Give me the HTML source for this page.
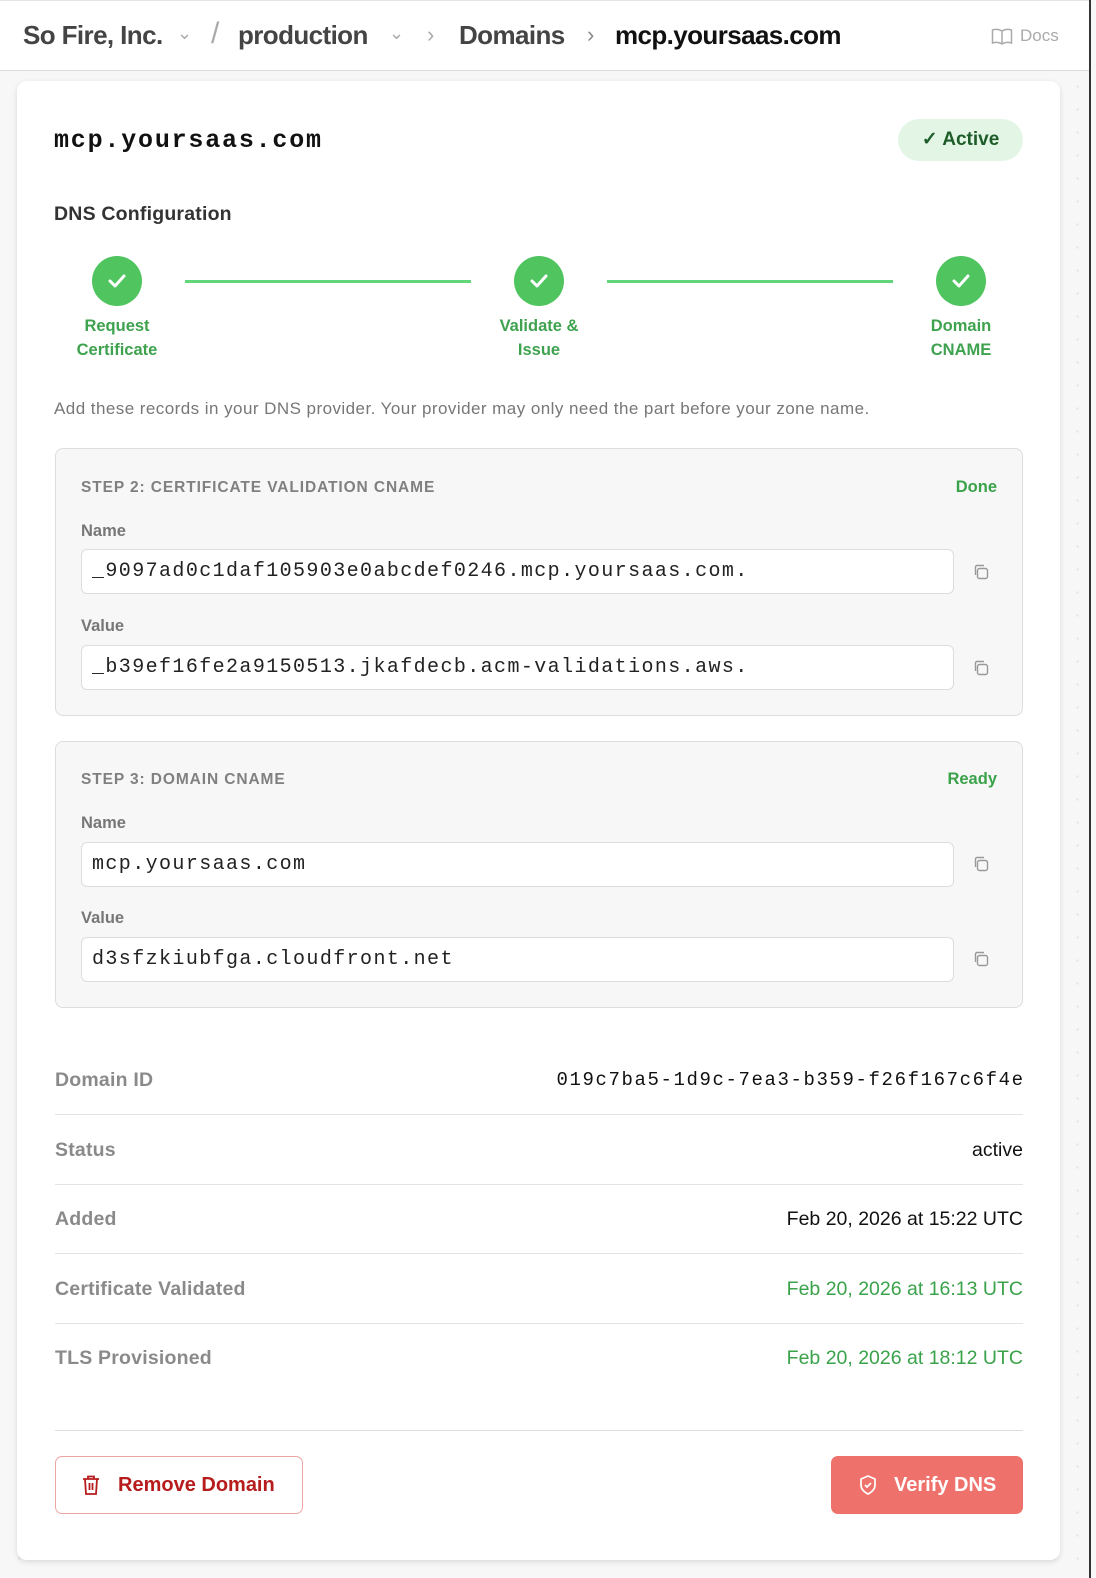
<!DOCTYPE html>
<html><head><meta charset="utf-8"><style>
*{box-sizing:border-box;margin:0;padding:0}
body{width:1096px;height:1578px;overflow:hidden;background:#f7f7f7;font-family:"Liberation Sans",sans-serif;position:relative;
background-image:radial-gradient(#e2e2e2 1px,transparent 1.2px);background-size:23px 23px;background-position:8px 6px}
.hdr{position:absolute;left:0;top:0;width:1090px;height:71px;background:#fff;border-bottom:1px solid #ddd;border-top:1px solid #e4e4e4}
.bc{position:absolute;top:19px;left:23px;font-size:26px;font-weight:bold;color:#444;white-space:nowrap;letter-spacing:-0.6px}
.bc span{position:absolute;top:0}
.muted{color:#aaa;font-weight:normal}
.sb{position:absolute;left:1089px;top:0;width:2px;height:1578px;background:#333}
.card{position:absolute;left:17px;top:81px;width:1043px;height:1479px;background:#fff;border-radius:10px;box-shadow:0 2px 6px rgba(0,0,0,.12)}
.a{position:absolute;white-space:nowrap}
.mono{font-family:"Liberation Mono",monospace}
.circ{position:absolute;width:50px;height:50px;border-radius:50%;background:#4fc45f;top:175px}
.line{position:absolute;height:3px;background:#62d67a;top:199px}
.lbl{position:absolute;width:160px;text-align:center;color:#3ea24e;font-weight:bold;font-size:16.5px;line-height:24px;top:233px}
.box{position:absolute;left:38px;width:968px;background:#f7f7f7;border:1px solid #ddd;border-radius:8px}
.bh{position:absolute;left:25px;font-size:15.5px;font-weight:bold;color:#808080;letter-spacing:0.9px}
.st{position:absolute;right:25px;font-size:16.5px;font-weight:bold;color:#3aa24a}
.fl{position:absolute;left:25px;font-size:16.5px;font-weight:bold;color:#777}
.inp{position:absolute;left:25px;width:873px;height:45px;background:#fff;border:1px solid #ddd;border-radius:6px;font-family:"Liberation Mono",monospace;font-size:20px;letter-spacing:1.4px;line-height:43px;padding-left:10px;color:#222}
.cp{position:absolute;left:916px}
.row{position:absolute;left:38px;width:968px;height:70px;border-bottom:1px solid #e3e3e3}
.row .k{position:absolute;left:0;top:24px;font-size:19.5px;font-weight:bold;color:#8a8a8a;letter-spacing:0.2px}
.row .v{position:absolute;right:0;top:24px;font-size:19.5px;color:#111}
</style></head><body>
<div class="hdr">
<div class="bc">
<span style="left:0">So Fire, Inc.</span>
<span class="muted" style="left:154px;font-size:18px;top:3px">⌄</span>
<span class="muted" style="left:188px;font-size:30px;top:-3px">/</span>
<span style="left:215px">production</span>
<span class="muted" style="left:366px;font-size:18px;top:3px">⌄</span>
<span class="muted" style="left:404px;font-size:22px;top:2px">›</span>
<span style="left:436px">Domains</span>
<span class="muted" style="left:564px;font-size:22px;top:2px;color:#888">›</span>
<span style="left:592px;color:#111">mcp.yoursaas.com</span>
</div>
<svg style="position:absolute;left:991px;top:27px" width="22" height="18" viewBox="0 0 22 18" fill="none" stroke="#aaa" stroke-width="1.5"><path d="M11 3C8 1 4 1 1.5 2v13c2.5-1 6.5-1 9.5 1 3-2 7-2 9.5-1V2C18 1 14 1 11 3zM11 3v13"/></svg>
<div class="a" style="left:1020px;top:25px;font-size:17px;color:#aaa">Docs</div>
</div>
<div class="card">
<div class="a mono" style="left:37px;top:45px;font-size:25px;letter-spacing:1.8px;font-weight:bold;color:#111">mcp.yoursaas.com</div>
<div class="a" style="left:881px;top:38px;width:125px;height:42px;border-radius:21px;background:#e3f6e6;color:#1e5c29;font-size:19px;font-weight:bold;line-height:42px;text-align:center">✓ Active</div>
<div class="a" style="left:37px;top:122px;font-size:19.5px;font-weight:bold;color:#333;letter-spacing:0.2px">DNS Configuration</div>
<div class="line" style="left:168px;width:286px"></div>
<div class="line" style="left:590px;width:286px"></div>
<div class="circ" style="left:75px"></div><div class="circ" style="left:497px"></div><div class="circ" style="left:919px"></div>
<svg class="a" style="left:75px;top:175px" width="50" height="50"><path d="M18 25l5 5 9-10" stroke="#fff" stroke-width="3" fill="none" stroke-linecap="round" stroke-linejoin="round"/></svg>
<svg class="a" style="left:497px;top:175px" width="50" height="50"><path d="M18 25l5 5 9-10" stroke="#fff" stroke-width="3" fill="none" stroke-linecap="round" stroke-linejoin="round"/></svg>
<svg class="a" style="left:919px;top:175px" width="50" height="50"><path d="M18 25l5 5 9-10" stroke="#fff" stroke-width="3" fill="none" stroke-linecap="round" stroke-linejoin="round"/></svg>
<div class="lbl" style="left:20px">Request<br>Certificate</div>
<div class="lbl" style="left:442px">Validate &amp;<br>Issue</div>
<div class="lbl" style="left:864px">Domain<br>CNAME</div>
<div class="a" style="left:37px;top:318px;font-size:17px;letter-spacing:0.45px;color:#777">Add these records in your DNS provider. Your provider may only need the part before your zone name.</div>

<div class="box" style="top:367px;height:268px">
<div class="bh" style="top:30px">STEP 2: CERTIFICATE VALIDATION CNAME</div><div class="st" style="top:29px">Done</div>
<div class="fl" style="top:73px">Name</div>
<div class="inp" style="top:100px">_9097ad0c1daf105903e0abcdef0246.mcp.yoursaas.com.</div>
<svg class="cp" style="top:114px" width="18" height="18" fill="none" stroke="#999" stroke-width="1.4"><rect x="5.5" y="5.5" width="10" height="10" rx="2"/><path d="M3.5 12V4a1.5 1.5 0 0 1 1.5-1.5h7"/></svg>
<div class="fl" style="top:168px">Value</div>
<div class="inp" style="top:196px">_b39ef16fe2a9150513.jkafdecb.acm-validations.aws.</div>
<svg class="cp" style="top:210px" width="18" height="18" fill="none" stroke="#999" stroke-width="1.4"><rect x="5.5" y="5.5" width="10" height="10" rx="2"/><path d="M3.5 12V4a1.5 1.5 0 0 1 1.5-1.5h7"/></svg>
</div>

<div class="box" style="top:660px;height:267px">
<div class="bh" style="top:29px">STEP 3: DOMAIN CNAME</div><div class="st" style="top:28px">Ready</div>
<div class="fl" style="top:72px">Name</div>
<div class="inp" style="top:100px">mcp.yoursaas.com</div>
<svg class="cp" style="top:113px" width="18" height="18" fill="none" stroke="#999" stroke-width="1.4"><rect x="5.5" y="5.5" width="10" height="10" rx="2"/><path d="M3.5 12V4a1.5 1.5 0 0 1 1.5-1.5h7"/></svg>
<div class="fl" style="top:167px">Value</div>
<div class="inp" style="top:195px">d3sfzkiubfga.cloudfront.net</div>
<svg class="cp" style="top:208px" width="18" height="18" fill="none" stroke="#999" stroke-width="1.4"><rect x="5.5" y="5.5" width="10" height="10" rx="2"/><path d="M3.5 12V4a1.5 1.5 0 0 1 1.5-1.5h7"/></svg>
</div>

<div class="row" style="top:964px"><div class="k">Domain ID</div><div class="v mono" style="font-size:19px;letter-spacing:1.6px;margin-right:-1.6px">019c7ba5-1d9c-7ea3-b359-f26f167c6f4e</div></div>
<div class="row" style="top:1034px"><div class="k">Status</div><div class="v">active</div></div>
<div class="row" style="top:1103px"><div class="k">Added</div><div class="v">Feb 20, 2026 at 15:22 UTC</div></div>
<div class="row" style="top:1173px"><div class="k">Certificate Validated</div><div class="v" style="color:#3aa24a">Feb 20, 2026 at 16:13 UTC</div></div>
<div class="row" style="top:1242px;border:none"><div class="k">TLS Provisioned</div><div class="v" style="color:#3aa24a">Feb 20, 2026 at 18:12 UTC</div></div>
<div class="a" style="left:38px;top:1349px;width:968px;height:1px;background:#ddd"></div>

<div class="a" style="left:38px;top:1375px;width:248px;height:58px;border:1px solid #f0a5a5;border-radius:7px;background:#fff"></div>
<svg class="a" style="left:64px;top:1393px" width="20" height="22" fill="none" stroke="#b71c1c" stroke-width="1.8"><path d="M2 5h16M7 5V2.5h6V5M4 5l1 15h10l1-15M8.5 9v7M11.5 9v7"/></svg>
<div class="a" style="left:101px;top:1393px;font-size:20px;font-weight:bold;color:#b71c1c">Remove Domain</div>
<div class="a" style="left:814px;top:1375px;width:192px;height:58px;border-radius:7px;background:#ee716b"></div>
<svg class="a" style="left:841px;top:1393px" width="20" height="22" fill="none" stroke="#fff" stroke-width="1.7"><path d="M10 2l7 3v6c0 4-3 7-7 9-4-2-7-5-7-9V5z"/><path d="M7 11l2 2 4-4"/></svg>
<div class="a" style="left:877px;top:1393px;font-size:20px;font-weight:bold;color:#fff">Verify DNS</div>
</div>
<div class="sb"></div>
</body></html>
